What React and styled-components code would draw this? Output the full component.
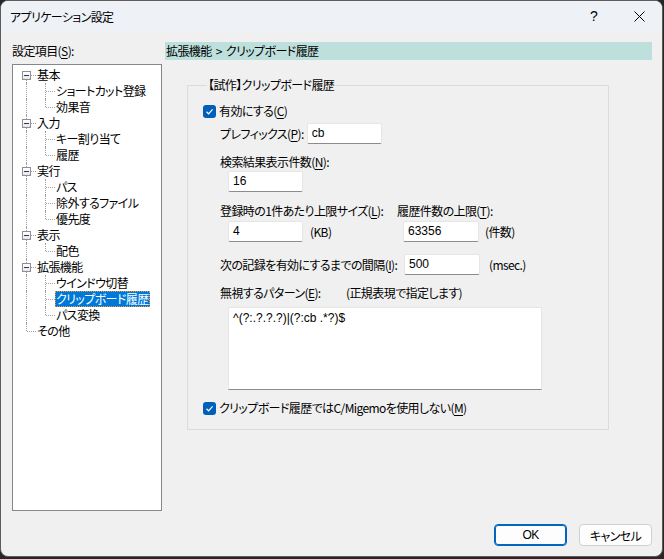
import React from "react";
import styled, { createGlobalStyle } from "styled-components";

const GlobalStyle = createGlobalStyle`
  html, body { margin: 0; padding: 0; background: #262626; }
  body {
    font-family: "Noto Sans CJK JP", "Noto Sans", sans-serif;
    font-size: 12px;
    color: #000;
    font-feature-settings: "palt";
    letter-spacing: -0.6px;
  }
  * { box-sizing: border-box; }
`;

const Window = styled.div`
  width: 663px;
  height: 557px;
  border: 1px solid #5c5c5c;
  border-radius: 8px;
  overflow: hidden;
  background: #f0f0f0;
  display: flex;
  flex-direction: column;
`;

const TitleBar = styled.div`
  height: 30px;
  flex: none;
  background: #eef2f7;
  display: flex;
  align-items: center;
  padding-left: 9px;
`;

const Title = styled.div`
  flex: 1;
  line-height: 16px;
  padding-top: 1px;
`;

const CaptionButton = styled.div`
  width: ${(p) => p.$w}px;
  height: 30px;
  display: flex;
  align-items: center;
  justify-content: center;
  font-size: 14px;
  letter-spacing: 0;
  font-family: "Liberation Sans", sans-serif;
`;

const Body = styled.div`
  flex: 1;
  display: flex;
  flex-direction: column;
  padding: 11px 9px 0 11px;
`;

const MainGrid = styled.div`
  display: grid;
  grid-template-columns: 150px 487px;
  grid-template-rows: 18px 447px;
  column-gap: 3px;
  row-gap: 4px;
`;

const SideLabel = styled.div`
  line-height: 18px;
`;

const U = styled.span`
  text-decoration: underline;
  text-underline-offset: 2px;
`;

const HeaderBar = styled.div`
  background: #bde0dd;
  line-height: 18px;
  padding-left: 1px;
  word-spacing: 2px;
`;

const Tree = styled.div`
  background: #fff;
  border: 1px solid #828790;
  padding: 2px 0 0 4px;
`;

const TreeRow = styled.div`
  display: flex;
  height: 16px;
  align-items: stretch;
`;

const Gutter = styled.span`
  position: relative;
  width: 19px;
  height: 16px;
  flex: none;
  &::before {
    content: ${(p) => (p.$v ? '""' : "none")};
    position: absolute;
    left: 9px;
    top: ${(p) => (p.$v === "bottom" ? "8px" : "0")};
    height: ${(p) => (p.$v === "full" ? "16px" : "8px")};
    border-left: 1px dotted #a0a0a0;
  }
  &::after {
    content: ${(p) => (p.$h ? '""' : "none")};
    position: absolute;
    left: 10px;
    top: 8px;
    width: 9px;
    border-top: 1px dotted #a0a0a0;
  }
`;

const ExpandBox = styled.span`
  position: absolute;
  left: 5px;
  top: 4px;
  width: 9px;
  height: 9px;
  border: 1px solid #8f8f8f;
  background: linear-gradient(#ffffff, #e6e6e6);
  z-index: 1;
  &::after {
    content: "";
    position: absolute;
    left: 1px;
    top: 3px;
    width: 5px;
    height: 1px;
    background: #1d3b8a;
  }
`;

const TreeLabel = styled.span`
  line-height: 16px;
  padding: 0 1px;
  white-space: nowrap;
  background: ${(p) => (p.$sel ? "#0078d7" : "transparent")};
  color: ${(p) => (p.$sel ? "#fff" : "#000")};
  outline: ${(p) => (p.$sel ? "1px dotted #e89a3c" : "none")};
  outline-offset: -1px;
`;

const RightPane = styled.div`
  padding: 13px 0 0 22px;
  width: 466px;
`;

const Group = styled.fieldset`
  margin: 0;
  width: 422px;
  height: 353px;
  border: 1px solid #dcdcdc;
  padding: 10px 0 0 15px;
`;

const Legend = styled.legend`
  padding: 0 1px;
  margin-left: 4px;
  line-height: 16px;
`;

const CheckRow = styled.div`
  display: flex;
  align-items: center;
  height: 16px;
  gap: 3px;
  margin-top: ${(p) => p.$mt || 0}px;
`;

const CheckBox = styled.span`
  width: 13px;
  height: 13px;
  border-radius: 3px;
  background: #005fb8;
  display: flex;
  align-items: center;
  justify-content: center;
`;

const Line = styled.div`
  display: flex;
  align-items: center;
  margin-top: ${(p) => p.$mt || 0}px;
  margin-left: ${(p) => p.$ml || 0}px;
  height: ${(p) => p.$h || 16}px;
`;

const Label = styled.span`
  line-height: 16px;
  white-space: nowrap;
  min-width: ${(p) => (p.$w ? `${p.$w}px` : "0")};
  padding-right: ${(p) => (p.$w ? "3px" : "0")};
  flex: none;
`;

const Col = styled.div`
  display: flex;
  align-items: center;
  width: ${(p) => p.$w}px;
  padding-left: ${(p) => p.$pl || 0}px;
  flex: none;
`;

const Input = styled.div`
  width: ${(p) => p.$w}px;
  height: 21px;
  flex: none;
  background: #fff;
  border: 1px solid #e6e6e6;
  border-bottom-color: #8c8c8c;
  border-radius: 2px;
  padding: 0 4px;
  line-height: 19px;
  letter-spacing: 0;
  font-family: "Liberation Sans", "Noto Sans CJK JP", sans-serif;
  font-size: 12px;
`;

const Unit = styled.span`
  margin-left: ${(p) => p.$ml}px;
  line-height: 16px;
  white-space: nowrap;
`;

const TextArea = styled.div`
  margin-left: 25px;
  margin-top: 6px;
  width: 314px;
  height: 83px;
  background: #fff;
  border: 1px solid #e6e6e6;
  border-bottom-color: #8c8c8c;
  padding: 2px 4px;
  line-height: 16px;
  letter-spacing: 0;
  font-family: "Liberation Sans", "Noto Sans CJK JP", sans-serif;
`;

const Footer = styled.div`
  display: flex;
  justify-content: flex-end;
  gap: 12px;
  padding: 13px 1px 0 0;
`;

const Button = styled.div`
  width: 73px;
  height: 22px;
  border-radius: 4px;
  display: flex;
  align-items: center;
  justify-content: center;
  background: #fdfdfd;
  border: 1px solid ${(p) => (p.$primary ? "#0067c0" : "#d0d0d0")};
  box-shadow: ${(p) => (p.$primary ? "inset 0 0 0 1px #0067c0" : "none")};
  font-family: "Liberation Sans", "Noto Sans CJK JP", sans-serif;
`;

const Check = () => (
  <svg width="9" height="9" viewBox="0 0 9 9">
    <polyline points="1.5,4.8 3.6,6.8 7.6,2.4" fill="none" stroke="#fff" strokeWidth="1.2" />
  </svg>
);

const tree = [
  { l: 0, t: "基本", box: true },
  { l: 1, t: "ショートカット登録" },
  { l: 1, t: "効果音", last: true },
  { l: 0, t: "入力", box: true },
  { l: 1, t: "キー割り当て" },
  { l: 1, t: "履歴", last: true },
  { l: 0, t: "実行", box: true },
  { l: 1, t: "パス" },
  { l: 1, t: "除外するファイル" },
  { l: 1, t: "優先度", last: true },
  { l: 0, t: "表示", box: true },
  { l: 1, t: "配色", last: true },
  { l: 0, t: "拡張機能", box: true },
  { l: 1, t: "ウインドウ切替" },
  { l: 1, t: "クリップボード履歴", sel: true },
  { l: 1, t: "パス変換", last: true },
  { l: 0, t: "その他" },
];

export default function App() {
  return (
    <>
      <GlobalStyle />
      <Window>
        <TitleBar>
          <Title>アプリケーション設定</Title>
          <CaptionButton $w={44}>?</CaptionButton>
          <CaptionButton $w={46}>
            <svg width="11" height="11" viewBox="0 0 11 11">
              <path d="M0.5 0.5 L10.5 10.5 M10.5 0.5 L0.5 10.5" stroke="#000" strokeWidth="1" />
            </svg>
          </CaptionButton>
        </TitleBar>
        <Body>
          <MainGrid>
            <SideLabel>
              設定項目(<U>S</U>):
            </SideLabel>
            <HeaderBar>拡張機能 &gt; クリップボード履歴</HeaderBar>
            <Tree>
              {tree.map((n, i) => {
                const first = i === 0;
                const lastRoot = i === tree.length - 1;
                return (
                  <TreeRow key={i}>
                    {n.l === 0 ? (
                      <Gutter $v={first ? "bottom" : lastRoot ? "top" : "full"} $h>
                        {n.box && <ExpandBox />}
                      </Gutter>
                    ) : (
                      <>
                        <Gutter $v="full" />
                        <Gutter $v={n.last ? "top" : "full"} $h />
                      </>
                    )}
                    <TreeLabel $sel={n.sel}>{n.t}</TreeLabel>
                  </TreeRow>
                );
              })}
            </Tree>
            <RightPane>
              <Group>
                <Legend>【試作】クリップボード履歴</Legend>
                <CheckRow>
                  <CheckBox>
                    <Check />
                  </CheckBox>
                  <Label>
                    有効にする(<U>C</U>)
                  </Label>
                </CheckRow>
                <Line $ml={17} $mt={4} $h={21}>
                  <Label $w={83}>
                    プレフィックス(<U>P</U>):
                  </Label>
                  <Input $w={75}>cb</Input>
                </Line>
                <Line $ml={17} $mt={10}>
                  <Label>
                    検索結果表示件数(<U>N</U>):
                  </Label>
                </Line>
                <Line $ml={25} $mt={1} $h={21}>
                  <Input $w={75}>16</Input>
                </Line>
                <Line $ml={17} $mt={11}>
                  <Col $w={177}>
                    <Label>
                      登録時の1件あたり上限サイズ(<U>L</U>):
                    </Label>
                  </Col>
                  <Col $w={120}>
                    <Label>
                      履歴件数の上限(<U>T</U>):
                    </Label>
                  </Col>
                </Line>
                <Line $ml={17} $mt={2} $h={21}>
                  <Col $w={177} $pl={8}>
                    <Input $w={75}>4</Input>
                    <Unit $ml={7}>(KB)</Unit>
                  </Col>
                  <Col $w={140} $pl={6}>
                    <Input $w={76}>63356</Input>
                    <Unit $ml={6}>(件数)</Unit>
                  </Col>
                </Line>
                <Line $ml={17} $mt={12} $h={21}>
                  <Label $w={184}>
                    次の記録を有効にするまでの間隔(<U>I</U>):
                  </Label>
                  <Input $w={76}>500</Input>
                  <Unit $ml={9}>(msec.)</Unit>
                </Line>
                <Line $ml={17} $mt={10}>
                  <Label $w={126}>
                    無視するパターン(<U>E</U>):
                  </Label>
                  <Label>(正規表現で指定します)</Label>
                </Line>
                <TextArea>^(?:.?.?.?)|(?:cb .*?)$</TextArea>
                <CheckRow $mt={10}>
                  <CheckBox>
                    <Check />
                  </CheckBox>
                  <Label>
                    クリップボード履歴ではC/Migemoを使用しない(<U>M</U>)
                  </Label>
                </CheckRow>
              </Group>
            </RightPane>
          </MainGrid>
          <Footer>
            <Button $primary>OK</Button>
            <Button>キャンセル</Button>
          </Footer>
        </Body>
      </Window>
    </>
  );
}
